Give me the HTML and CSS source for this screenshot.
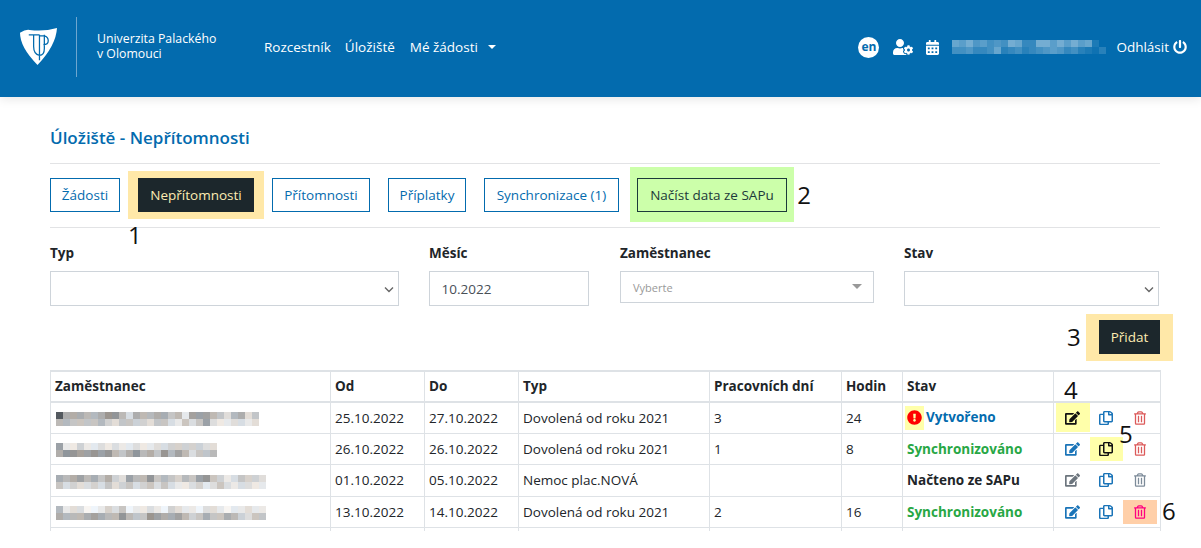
FILE: index.html
```html
<!DOCTYPE html>
<html lang="cs">
<head>
<meta charset="utf-8">
<title>Úložiště - Nepřítomnosti</title>
<link rel="stylesheet" href="styles.css">
</head>
<body>
<svg class="sprite" aria-hidden="true">
  <symbol id="i-edit" viewBox="0 0 576 512"><path d="M402.6 83.2l90.2 90.2c3.8 3.8 3.8 10 0 13.8L274.4 405.6l-92.8 10.3c-12.4 1.4-22.9-9.1-21.5-21.5l10.3-92.8L388.8 83.2c3.8-3.8 10-3.8 13.8 0zm162-22.9l-48.8-48.8c-15.2-15.2-39.9-15.2-55.2 0l-35.4 35.4c-3.8 3.8-3.8 10 0 13.8l90.2 90.2c3.8 3.8 10 3.8 13.8 0l35.4-35.4c15.2-15.3 15.2-40 0-55.2zM384 346.2V448H64V128h229.8c3.2 0 6.2-1.3 8.5-3.5l40-40c7.6-7.6 2.2-20.5-8.5-20.5H48C21.5 64 0 85.5 0 112v352c0 26.5 21.5 48 48 48h352c26.5 0 48-21.5 48-48V306.2c0-10.7-12.9-16-20.5-8.5l-40 40c-2.2 2.3-3.5 5.3-3.5 8.5z"/></symbol>
  <symbol id="i-copy" viewBox="0 0 448 512" preserveAspectRatio="none"><path d="M433.941 65.941l-51.882-51.882A48 48 0 0 0 348.118 0H176c-26.51 0-48 21.49-48 48v48H48c-26.51 0-48 21.49-48 48v320c0 26.51 21.49 48 48 48h224c26.51 0 48-21.49 48-48v-48h80c26.51 0 48-21.49 48-48V99.882a48 48 0 0 0-14.059-33.941zM266 464H54a6 6 0 0 1-6-6V150a6 6 0 0 1 6-6h74v224c0 26.51 21.49 48 48 48h96v42a6 6 0 0 1-6 6zm128-96H182a6 6 0 0 1-6-6V54a6 6 0 0 1 6-6h106v88c0 13.255 10.745 24 24 24h88v202a6 6 0 0 1-6 6zm6-256h-64V48h9.632c1.591 0 3.117.632 4.243 1.757l48.368 48.368a6 6 0 0 1 1.757 4.243V112z"/></symbol>
  <symbol id="i-trash" viewBox="0 0 448 512"><path d="M268 416h24a12 12 0 0 0 12-12V188a12 12 0 0 0-12-12h-24a12 12 0 0 0-12 12v216a12 12 0 0 0 12 12zM432 80h-82.41l-34-56.7A48 48 0 0 0 274.41 0H173.59a48 48 0 0 0-41.16 23.3L98.41 80H16A16 16 0 0 0 0 96v16a16 16 0 0 0 16 16h16v336a48 48 0 0 0 48 48h288a48 48 0 0 0 48-48V128h16a16 16 0 0 0 16-16V96a16 16 0 0 0-16-16zM171.84 50.91A6 6 0 0 1 177 48h94a6 6 0 0 1 5.15 2.91L293.61 80H154.39zM368 464H80V128h288zm-212-48h24a12 12 0 0 0 12-12V188a12 12 0 0 0-12-12h-24a12 12 0 0 0-12 12v216a12 12 0 0 0 12 12z"/></symbol>
  <symbol id="i-alert" viewBox="0 0 512 512"><path d="M504 256c0 136.997-111.043 248-248 248S8 392.997 8 256C8 119.083 119.043 8 256 8s248 111.083 248 248zm-248 50c-25.405 0-46 20.595-46 46s20.595 46 46 46 46-20.595 46-46-20.595-46-46-46zm-43.673-165.346l7.418 136c.347 6.364 5.609 11.346 11.982 11.346h48.546c6.373 0 11.635-4.982 11.982-11.346l7.418-136c.375-6.874-5.098-12.654-11.982-12.654h-63.383c-6.884 0-12.356 5.78-11.981 12.654z"/></symbol>
</svg>

<header class="topbar">
  <div class="brand">
    <svg class="logo" viewBox="0 0 38 38" aria-hidden="true">
      <path class="logo-shield" d="M0 5Q6 1 10 2Q24 4 38 0Q37 18 18 38Q0 20 0 5Z"/>
      <path class="logo-mark" d="M9 7H20M14 7V19Q14 27 20 28Q25 28 25 21V7M20 7V33M20 8H25Q29 9 29 13Q29 17 24 17"/>
    </svg>
    <div class="brand-name">Univerzita Palackého<br>v Olomouci</div>
  </div>
  <nav class="nav">
    <a href="#">Rozcestník</a>
    <a href="#">Úložiště</a>
    <a href="#" class="nav-drop">Mé žádosti<span class="caret"></span></a>
  </nav>
  <div class="user">
    <span class="lang">en</span>
    <svg class="ic-cog" viewBox="0 0 640 512" aria-hidden="true"><path d="M610.5 373.3c2.6-14.1 2.6-28.5 0-42.6l25.8-14.9c3-1.7 4.3-5.2 3.3-8.5-6.7-21.6-18.2-41.2-33.2-57.4-2.3-2.5-6-3.1-9-1.4l-25.8 14.9c-10.9-9.3-23.4-16.5-36.9-21.3v-29.8c0-3.4-2.4-6.4-5.7-7.1-22.3-5-45-4.8-66.2 0-3.3.7-5.7 3.7-5.7 7.1v29.8c-13.5 4.8-26 12-36.9 21.3l-25.8-14.9c-2.9-1.7-6.7-1.1-9 1.4-15 16.2-26.5 35.8-33.2 57.4-1 3.3.4 6.8 3.3 8.5l25.8 14.9c-2.6 14.1-2.6 28.5 0 42.6l-25.8 14.9c-3 1.7-4.3 5.2-3.3 8.5 6.7 21.6 18.2 41.1 33.2 57.4 2.3 2.5 6 3.1 9 1.4l25.8-14.9c10.9 9.3 23.4 16.5 36.9 21.3v29.8c0 3.4 2.4 6.4 5.7 7.1 22.3 5 45 4.8 66.2 0 3.3-.7 5.7-3.7 5.7-7.1v-29.8c13.5-4.8 26-12 36.9-21.3l25.8 14.9c2.9 1.7 6.7 1.1 9-1.4 15-16.2 26.5-35.8 33.2-57.4 1-3.3-.4-6.8-3.3-8.5l-25.8-14.9zM496 400.5c-26.8 0-48.5-21.8-48.5-48.5s21.8-48.5 48.5-48.5 48.5 21.8 48.5 48.5-21.7 48.5-48.5 48.5zM224 256c70.7 0 128-57.3 128-128S294.7 0 224 0 96 57.3 96 128s57.3 128 128 128zm201.2 226.5c-2.3-1.2-4.6-2.6-6.8-3.9l-7.9 4.6c-6 3.4-12.8 5.3-19.6 5.3-10.9 0-21.4-4.6-28.9-12.6-18.3-19.8-32.3-43.9-40.2-69.6-5.5-17.7 1.9-36.4 17.9-45.7l7.9-4.6c-.1-2.6-.1-5.2 0-7.8l-7.9-4.6c-16-9.2-23.4-28-17.9-45.7.9-2.9 2.2-5.8 3.2-8.7-3.8-.3-7.5-1.2-11.4-1.2h-16.7c-22.2 10.2-46.9 16-72.9 16s-50.6-5.8-72.9-16h-16.7C60.2 288 0 348.2 0 422.4V464c0 26.5 21.5 48 48 48h352c10.1 0 19.5-3.2 27.2-8.5-1.2-3.8-2-7.7-2-11.8v-9.2z"/></svg>
    <svg class="ic-cal" viewBox="0 0 448 512" aria-hidden="true"><path d="M0 464c0 26.5 21.5 48 48 48h352c26.5 0 48-21.5 48-48V192H0v272zm320-196c0-6.6 5.4-12 12-12h40c6.6 0 12 5.4 12 12v40c0 6.6-5.4 12-12 12h-40c-6.6 0-12-5.4-12-12v-40zm0 128c0-6.6 5.4-12 12-12h40c6.6 0 12 5.4 12 12v40c0 6.6-5.4 12-12 12h-40c-6.6 0-12-5.4-12-12v-40zM192 268c0-6.6 5.4-12 12-12h40c6.6 0 12 5.4 12 12v40c0 6.6-5.4 12-12 12h-40c-6.6 0-12-5.4-12-12v-40zm0 128c0-6.6 5.4-12 12-12h40c6.6 0 12 5.4 12 12v40c0 6.6-5.4 12-12 12h-40c-6.6 0-12-5.4-12-12v-40zM64 268c0-6.6 5.4-12 12-12h40c6.6 0 12 5.4 12 12v40c0 6.6-5.4 12-12 12H76c-6.6 0-12-5.4-12-12v-40zm0 128c0-6.6 5.4-12 12-12h40c6.6 0 12 5.4 12 12v40c0 6.6-5.4 12-12 12H76c-6.6 0-12-5.4-12-12v-40zM400 64h-48V16c0-8.8-7.2-16-16-16h-32c-8.8 0-16 7.2-16 16v48H160V16c0-8.8-7.2-16-16-16h-32c-8.8 0-16 7.2-16 16v48H48C21.5 64 0 85.5 0 112v48h448v-48c0-26.5-21.5-48-48-48z"/></svg>
    <span class="mosaic mosaic-light" data-m="87967 56598 44997 97978 20/55644 58345 34567 64532 13"></span>
    <a href="#" class="logout">Odhlásit
      <svg class="ic-power" viewBox="0 0 512 512" aria-hidden="true"><path d="M400 54.1c63 45 104 118.6 104 201.9 0 136.8-110.8 247.7-247.5 248C120 504.3 8.2 393 8 256.4 7.9 173.1 48.9 99.3 111.8 54.2c11.7-8.3 28-4.8 35 7.7L162.6 90c5.9 10.5 3.1 23.8-6.6 31-41.5 30.8-68 79.6-68 134.9-.1 92.3 74.5 168.1 168 168.1 91.6 0 168.6-74.2 168-169.1-.3-51.8-24.7-101.8-68.1-134-9.7-7.2-12.4-20.5-6.5-30.9l15.8-28.1c7-12.4 23.2-16.1 34.8-7.9zM296 264V24c0-13.3-10.7-24-24-24h-32c-13.3 0-24 10.7-24 24v240c0 13.3 10.7 24 24 24h32c13.3 0 24-10.7 24-24z"/></svg>
    </a>
  </div>
</header>

<main class="page">
  <h1 class="title">Úložiště - Nepřítomnosti</h1>

  <div class="tabs">
    <a href="#" class="btn">Žádosti</a>
    <a href="#" class="btn btn-dark mark-amber">Nepřítomnosti<span class="note note-1">1</span></a>
    <a href="#" class="btn">Přítomnosti</a>
    <a href="#" class="btn">Příplatky</a>
    <a href="#" class="btn">Synchronizace (1)</a>
    <a href="#" class="btn btn-sap">Načíst data ze SAPu<span class="note note-2">2</span></a>
  </div>

  <form class="filters">
    <div class="field">
      <label class="label">Typ</label>
      <div class="control control-select"></div>
    </div>
    <div class="field">
      <label class="label">Měsíc</label>
      <div class="control control-month">10.2022</div>
    </div>
    <div class="field">
      <label class="label">Zaměstnanec</label>
      <div class="control control-pick">Vyberte<span class="pick-caret"></span></div>
    </div>
    <div class="field">
      <label class="label">Stav</label>
      <div class="control control-select"></div>
    </div>
  </form>

  <div class="add-row">
    <a href="#" class="btn btn-dark mark-amber mark-add">Přidat<span class="note note-3">3</span></a>
  </div>

  <div class="table-clip">
    <table class="grid">
      <colgroup>
        <col class="c-name"><col class="c-date"><col class="c-date"><col class="c-type"><col class="c-days"><col class="c-hours"><col class="c-state"><col class="c-act">
      </colgroup>
      <thead>
        <tr><th>Zaměstnanec</th><th>Od</th><th>Do</th><th>Typ</th><th>Pracovních dní</th><th>Hodin</th><th>Stav</th><th class="note-cell"><span class="note note-4">4</span></th></tr>
      </thead>
      <tbody>
        <tr>
          <td><span class="mosaic" data-m="18889 98669 C8998 8A9D7 779AC 98CA/99AAA A9BCA ABBCA ACDAC A7CDD CCDC"></span></td>
          <td>25.10.2022</td><td>27.10.2022</td><td>Dovolená od roku 2021</td><td>3</td><td>24</td>
          <td><span class="state-mark"><svg class="ic-alert"><use href="#i-alert"/></svg></span><strong class="st st-new">Vytvořeno</strong></td>
          <td class="acts">
            <a href="#" class="act hl-yellow ink-black"><svg class="ic-edit"><use href="#i-edit"/></svg></a>
            <a href="#" class="act ink-blue"><svg class="ic-copy"><use href="#i-copy"/></svg></a>
            <a href="#" class="act ink-red"><svg class="ic-trash"><use href="#i-trash"/></svg></a>
          </td>
        </tr>
        <tr>
          <td><span class="mosaic" data-m="7DDBD DCDCD DCDDC CBBBB BCC/86677 6769A 8698A 6979C AA9"></span></td>
          <td>26.10.2022</td><td>26.10.2022</td><td>Dovolená od roku 2021</td><td>1</td><td>8</td>
          <td><strong class="st st-ok">Synchronizováno</strong></td>
          <td class="acts">
            <a href="#" class="act ink-blue"><svg class="ic-edit"><use href="#i-edit"/></svg></a>
            <a href="#" class="act hl-yellow hl-slim ink-black"><svg class="ic-copy"><use href="#i-copy"/></svg></a>
            <a href="#" class="act ink-red"><svg class="ic-trash"><use href="#i-trash"/></svg></a>
            <span class="note note-5">5</span>
          </td>
        </tr>
        <tr>
          <td><span class="mosaic" data-m="89879 8A8BC 7996A 9AB9A 76ABD CABBC/ACBCC BCACB ACBAC ACDDC BDCAC DCCDD"></span></td>
          <td>01.10.2022</td><td>05.10.2022</td><td>Nemoc plac.NOVÁ</td><td></td><td></td>
          <td><strong class="st">Načteno ze SAPu</strong></td>
          <td class="acts">
            <a href="#" class="act ink-gray"><svg class="ic-edit"><use href="#i-edit"/></svg></a>
            <a href="#" class="act ink-blue"><svg class="ic-copy"><use href="#i-copy"/></svg></a>
            <a href="#" class="act ink-slate"><svg class="ic-trash"><use href="#i-trash"/></svg></a>
          </td>
        </tr>
        <tr>
          <td><span class="mosaic" data-m="9DCCE EDBCA EDDCD EBCDD ECCDE DDCDD/89998 78996 9AA67 8879B A8AA8 9BCAA"></span></td>
          <td>13.10.2022</td><td>14.10.2022</td><td>Dovolená od roku 2021</td><td>2</td><td>16</td>
          <td><strong class="st st-ok">Synchronizováno</strong></td>
          <td class="acts">
            <a href="#" class="act ink-blue"><svg class="ic-edit"><use href="#i-edit"/></svg></a>
            <a href="#" class="act ink-blue"><svg class="ic-copy"><use href="#i-copy"/></svg></a>
            <a href="#" class="act hl-peach hl-slim ink-pink"><svg class="ic-trash"><use href="#i-trash"/></svg></a>
            <span class="note note-6">6</span>
          </td>
        </tr>
        <tr><td></td><td></td><td></td><td></td><td></td><td></td><td></td><td></td></tr>
      </tbody>
    </table>
  </div>
</main>
<script src="mosaic.js"></script>
</body>
</html>
```

FILE: styles.css
```css
* { box-sizing: border-box; }
html, body { margin: 0; padding: 0; }
body {
  background: #fff;
  color: #212529;
  font-family: "Open Sans", "Noto Sans", sans-serif;
  font-size: 13.5px;
  overflow: hidden;
  height: 548px;
}
a { text-decoration: none; color: inherit; }
.sprite { display: none; }

/* header */
.topbar {
  height: 97px;
  background: #036bae;
  color: #fff;
  display: flex;
  align-items: center;
  padding: 0 14px 3px 20px;
  box-shadow: 0 2px 10px rgba(0, 0, 0, .1);
  position: relative;
}
.brand { display: flex; align-items: center; }
.logo { width: 37px; height: 37px; margin-top: -2px; }
.logo-shield { fill: #fff; }
.logo-mark { fill: none; stroke: #036bae; stroke-width: 1.3; }
.brand-name {
  display: block;
  margin-left: 19px;
  padding: 14px 0 0 20px;
  height: 60px;
  width: 188px;
  border-left: 1px solid #6ea6cf;
  font-size: 12.3px;
  line-height: 15px;
}
.nav { display: flex; gap: 14px; font-size: 13.5px; }
.nav-drop { display: inline-flex; align-items: center; margin-left: 1px; }
.caret {
  width: 0; height: 0;
  margin-left: 10px;
  border-left: 4px solid transparent;
  border-right: 4px solid transparent;
  border-top: 4px solid #fff;
}
.user { margin-left: auto; display: flex; align-items: center; }
.lang {
  width: 21px; height: 21px;
  border-radius: 50%;
  background: #fff;
  color: #036bae;
  font-size: 12px;
  font-weight: 700;
  line-height: 20px;
  text-align: center;
}
.ic-cog { width: 20px; height: 16px; margin-left: 14px; fill: #fff; }
.ic-cal { width: 13px; height: 15px; margin-left: 13px; fill: #fff; }
.mosaic { display: inline-block; vertical-align: middle; line-height: 0; margin-left: 1px; }
.mosaic svg { display: block; }
.user .mosaic { margin-left: 13px; }
.logout { display: inline-flex; align-items: center; margin-left: 10px; font-size: 13.5px; }
.ic-power { width: 14px; height: 14px; margin-left: 4px; fill: #fff; }

/* page */
.page { padding: 0 41px 0 50px; position: relative; }
.title {
  margin: 29px 0 0;
  height: 38px;
  padding-bottom: 14px;
  border-bottom: 1px solid #e2e3e5;
  color: #036bae;
  font-size: 17px;
  line-height: 24px;
  font-weight: 600;
}
.tabs {
  display: grid;
  grid-template-columns: 70px 116px 98px 78px 135px 150px;
  column-gap: 18px;
  padding: 14px 0 15px;
  border-bottom: 1px solid #e2e3e5;
}
.btn {
  position: relative;
  display: inline-block;
  height: 34px;
  border: 1px solid #036bae;
  color: #036bae;
  font-size: 13.5px;
  line-height: 32px;
  text-align: center;
  background: #fff;
  white-space: nowrap;
}
.btn-dark { background: #1c272c; border-color: #1c272c; color: #fdecb2; }
.btn-sap { background: #ccffaa; color: #1c3a3a; border-color: #1c3a3a; }
.btn-sap::before {
  content: "";
  position: absolute;
  inset: -12px -8px -11px;
  background: #ccffaa;
  z-index: -1;
}
.mark-amber::before {
  content: "";
  position: absolute;
  inset: -8px -11px;
  background: #ffe8a8;
  z-index: -1;
}
.mark-add::before { inset: -7px -14px -8px -14px; }

/* annotations */
.note {
  position: absolute;
  font-size: 24px;
  line-height: 28px;
  color: #111;
  font-weight: 400;
  font-family: "Open Sans", sans-serif;
}
.note-1 { left: -11px; top: 42px; }
.note-2 { right: -25px; top: 2px; }
.note-3 { left: -33px; top: 2px; }
.note-4 { left: 10px; top: 4px; }
.note-5 { left: 65px; top: -14px; }
.note-6 { left: 108px; top: 0; }

/* filters */
.filters {
  display: grid;
  grid-template-columns: 349px 161px 254px 255px;
  column-gap: 30px;
  padding-top: 16px;
}
.label {
  display: block;
  height: 18px;
  margin-bottom: 9px;
  font-size: 13.5px;
  line-height: 18px;
  font-weight: 700;
}
.control {
  height: 35px;
  border: 1px solid #ced4da;
  background: #fff;
}
.control-select {
  background-image: url("data:image/svg+xml,%3Csvg xmlns='http://www.w3.org/2000/svg' width='12' height='12' viewBox='0 0 12 12'%3E%3Cpath d='M2 4.5l4 4 4-4' fill='none' stroke='%23666' stroke-width='1.4'/%3E%3C/svg%3E");
  background-repeat: no-repeat;
  background-position: right 3px center;
}
.control-month { width: 160px; padding-left: 11.5px; line-height: 34px; color: #495057; font-size: 13.5px; }
.control-pick {
  position: relative;
  height: 32px;
  padding-left: 12px;
  line-height: 31px;
  font-size: 11px;
  color: #999;
}
.pick-caret {
  position: absolute;
  right: 11px;
  top: 12px;
  border-left: 5px solid transparent;
  border-right: 5px solid transparent;
  border-top: 5px solid #999;
}

/* add */
.add-row { display: flex; justify-content: flex-end; margin-top: 14px; }
.add-row .btn { width: 61px; }

/* table */
.table-clip {
  margin-top: 16px;
  height: 161px;
  clip-path: inset(0 -60px 0 0);
}
.grid {
  width: 1110px;
  table-layout: fixed;
  border-collapse: collapse;
  font-size: 13.5px;
  line-height: 18px;
}
.c-name { width: 280px; }
.c-date { width: 94px; }
.c-type { width: 191px; }
.c-days { width: 132px; }
.c-hours { width: 61px; }
.c-state { width: 151px; }
.c-act { width: 107px; }
.grid th, .grid td {
  border: 1px solid #dee2e6;
  padding: 0 4px;
  height: 31.5px;
  text-align: left;
  white-space: nowrap;
}
.grid thead th { border-top-width: 2px; border-bottom-width: 2px; height: 30.5px; font-weight: 700; }
.note-cell { position: relative; }
.st { font-weight: 700; }
.st-new { color: #036bae; }
.st-ok { color: #28a745; }
.state-mark {
  display: inline-flex;
  align-items: center;
  justify-content: center;
  width: 19px;
  height: 24px;
  margin: 0 2px 0 -2px;
  vertical-align: middle;
  background: #ffffaa;
}
.ic-alert { width: 15px; height: 15px; fill: #f00; }
.grid td.acts { padding: 0 0 0 2px; position: relative; }
.acts { font-size: 0; }
.act {
  display: inline-flex;
  align-items: center;
  justify-content: center;
  width: 33.5px;
  height: 29px;
  vertical-align: middle;
}
.act svg { fill: currentColor; }
.ic-edit { width: 15px; height: 14px; }
.ic-copy { width: 14px; height: 14px; }
.ic-trash { width: 12px; height: 14px; }
.hl-yellow { background: #ffffaa; }
.hl-peach { background: #ffcfa8; }
.hl-slim { height: 24px; }
.ink-black { color: #111; }
.ink-blue { color: #1a74b8; }
.ink-red { color: #dc5a5a; }
.ink-gray { color: #6c757d; }
.ink-slate { color: #7d8b99; }
.ink-pink { color: #ff0080; }
```

FILE: mosaic.js
```js
// Renders the anonymised (pixelated) names from rows of lightness digits.
var SIZE = 7;
var NS = 'http://www.w3.org/2000/svg';

document.querySelectorAll('.mosaic').forEach(function (el) {
  var rows = el.dataset.m.replace(/ /g, '').split('/');
  var light = el.classList.contains('mosaic-light');
  var cols = Math.max.apply(null, rows.map(function (r) { return r.length; }));
  var svg = document.createElementNS(NS, 'svg');
  svg.setAttribute('width', cols * SIZE);
  svg.setAttribute('height', rows.length * SIZE);

  rows.forEach(function (row, y) {
    row.split('').forEach(function (ch, x) {
      var v = parseInt(ch, 16);
      var rect = document.createElementNS(NS, 'rect');
      rect.setAttribute('x', x * SIZE);
      rect.setAttribute('y', y * SIZE);
      rect.setAttribute('width', SIZE);
      rect.setAttribute('height', SIZE);
      if (light) {
        rect.setAttribute('fill', 'rgba(255,255,255,' + (v / 15 * 0.75).toFixed(3) + ')');
      } else {
        var g = 0x4d + v * 12;
        var t = (((x * 7 + y * 3) % 5) - 2) * 3;
        rect.setAttribute('fill', 'rgb(' + (g + t) + ',' + g + ',' + (g - t) + ')');
      }
      svg.appendChild(rect);
    });
  });
  el.appendChild(svg);
});
```
